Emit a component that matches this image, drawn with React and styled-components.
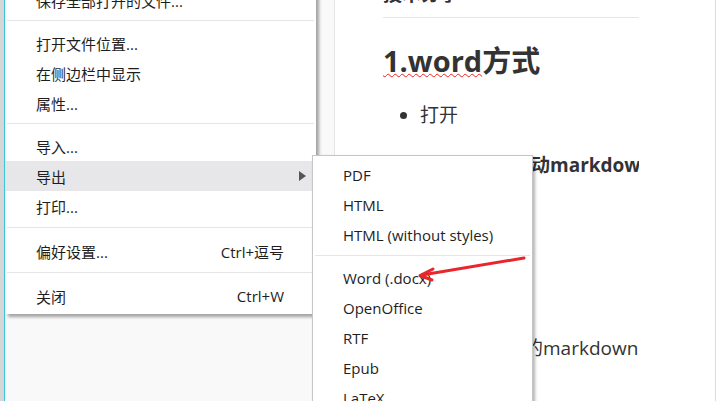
import styled, { createGlobalStyle } from 'styled-components';

const GlobalStyle = createGlobalStyle`
  html, body {
    margin: 0;
    padding: 0;
    overflow: hidden;
    background: #ffffff;
  }
`;

const mainItems = [
  { label: '保存全部打开的文件...' },
  { sep: true },
  { label: '打开文件位置...' },
  { label: '在侧边栏中显示' },
  { label: '属性...' },
  { sep: true },
  { label: '导入...' },
  { label: '导出', active: true, sub: true },
  { label: '打印...' },
  { sep: true, loose: true },
  { label: '偏好设置...', shortcut: 'Ctrl+逗号' },
  { sep: true, loose: true },
  { label: '关闭', shortcut: 'Ctrl+W' },
];

const exportItems = [
  { label: 'PDF' },
  { label: 'HTML' },
  { label: 'HTML (without styles)' },
  { sep: true },
  { label: 'Word (.docx)' },
  { label: 'OpenOffice' },
  { label: 'RTF' },
  { label: 'Epub' },
  { label: 'LaTeX' },
];

export default function App() {
  return (
    <>
      <GlobalStyle />
      <Window>
        <LeftStrip />
        <Sidebar />
        <Editor>
          <Content>
            <CutTitle>技术分享</CutTitle>
            <Rule />
            <Heading>
              <Misspelled>1.word</Misspelled>方式
            </Heading>
            <Bullets>
              <li>打开</li>
            </Bullets>
            <BoldLine>导出的文件将自动markdown</BoldLine>
            <Paragraph>即可得到转换后的markdown</Paragraph>
          </Content>
        </Editor>

        <Menu>
          {mainItems.map((item, i) =>
            item.sep ? (
              <Separator key={i} $loose={item.loose} />
            ) : (
              <Item key={i} $active={item.active}>
                <span>{item.label}</span>
                {item.shortcut && <Shortcut>{item.shortcut}</Shortcut>}
                {item.sub && (
                  <SubArrow width="7" height="10" viewBox="0 0 7 10">
                    <polygon points="0,0 7,5 0,10" fill="#555" />
                  </SubArrow>
                )}
              </Item>
            )
          )}
        </Menu>

        <SubMenu>
          {exportItems.map((item, i) =>
            item.sep ? (
              <Separator key={i} />
            ) : (
              <SubItem key={i}>{item.label}</SubItem>
            )
          )}
        </SubMenu>

        <Arrow width="120" height="30" viewBox="0 0 120 30">
          <line x1="108" y1="2" x2="6" y2="19" stroke="#e8262c" strokeWidth="3" strokeLinecap="round" />
          <polyline points="17,13 4,19.5 16,24" fill="none" stroke="#e8262c" strokeWidth="3" strokeLinecap="round" strokeLinejoin="round" />
        </Arrow>
      </Window>
    </>
  );
}

const Window = styled.div`
  position: relative;
  display: flex;
  width: 717px;
  height: 401px;
  overflow: hidden;
  font-family: 'Open Sans', 'Noto Sans CJK SC', sans-serif;
`;

const LeftStrip = styled.div`
  width: 4px;
  background: #d6d6d6;
`;

const Sidebar = styled.div`
  width: 329px;
  background: #f9f9f9;
  border-left: 1px solid #3cc6dc;
  border-right: 1px solid #e4e4e4;
`;

const Editor = styled.div`
  flex: 1;
  background: #ffffff;
  border-right: 1px solid #dcdcdc;
  margin-right: 1px;
  padding-left: 48px;
`;

const Content = styled.div`
  width: 256px;
  overflow: hidden;
  white-space: nowrap;
  color: #333333;
`;

const CutTitle = styled.div`
  margin-top: -17px;
  font-size: 19px;
  line-height: 22px;
  font-weight: 600;
`;

const Rule = styled.div`
  height: 1px;
  margin-top: 12px;
  background: #e6e6e6;
`;

const Heading = styled.h2`
  margin: 25px 0 0;
  font-size: 29px;
  line-height: 35px;
  font-weight: 700;
`;

const Misspelled = styled.span`
  text-decoration: underline wavy #ee2222;
  text-decoration-thickness: 1px;
  text-underline-offset: 1px;
`;

const Bullets = styled.ul`
  margin: 22px 0 0;
  padding-left: 37px;
  font-size: 19px;
  line-height: 30px;
`;

const BoldLine = styled.p`
  margin: 20px 0 0;
  padding-left: 15px;
  font-size: 19px;
  line-height: 30px;
  font-weight: 700;
`;

const Paragraph = styled.p`
  margin: 153px 0 0;
  padding-left: 8px;
  font-size: 19px;
  line-height: 30px;
`;

const Menu = styled.div`
  position: absolute;
  left: 5px;
  top: -18px;
  width: 311px;
  padding: 3px 0 3px;
  background: #ffffff;
  box-shadow: 3px 3px 3px rgba(0, 0, 0, 0.35);
  font-size: 15px;
  color: #1e1e1e;
`;

const Item = styled.div`
  position: relative;
  display: flex;
  align-items: center;
  justify-content: space-between;
  height: 30px;
  padding: 0 32px 0 31px;
  background: ${({ $active }) => ($active ? '#e7e7ea' : 'transparent')};
`;

const Shortcut = styled.span`
  color: #1e1e1e;
`;

const SubArrow = styled.svg`
  position: absolute;
  right: 10px;
  top: 10px;
`;

const Separator = styled.div`
  height: 1px;
  margin: ${({ $loose }) => ($loose ? '6px 2px 8px' : '5px 2px 7px')};
  background: #e6e6e8;
`;

const SubMenu = styled.div`
  position: absolute;
  left: 312px;
  top: 155px;
  width: 219px;
  height: 260px;
  padding-top: 4px;
  background: #ffffff;
  border: 1px solid #c6c6c6;
  box-shadow: 2px 2px 3px rgba(0, 0, 0, 0.3);
  font-size: 15px;
  color: #1e1e1e;
`;

const SubItem = styled.div`
  display: flex;
  align-items: center;
  height: 30px;
  padding-left: 30px;
`;

const Arrow = styled.svg`
  position: absolute;
  left: 416px;
  top: 256px;
`;
